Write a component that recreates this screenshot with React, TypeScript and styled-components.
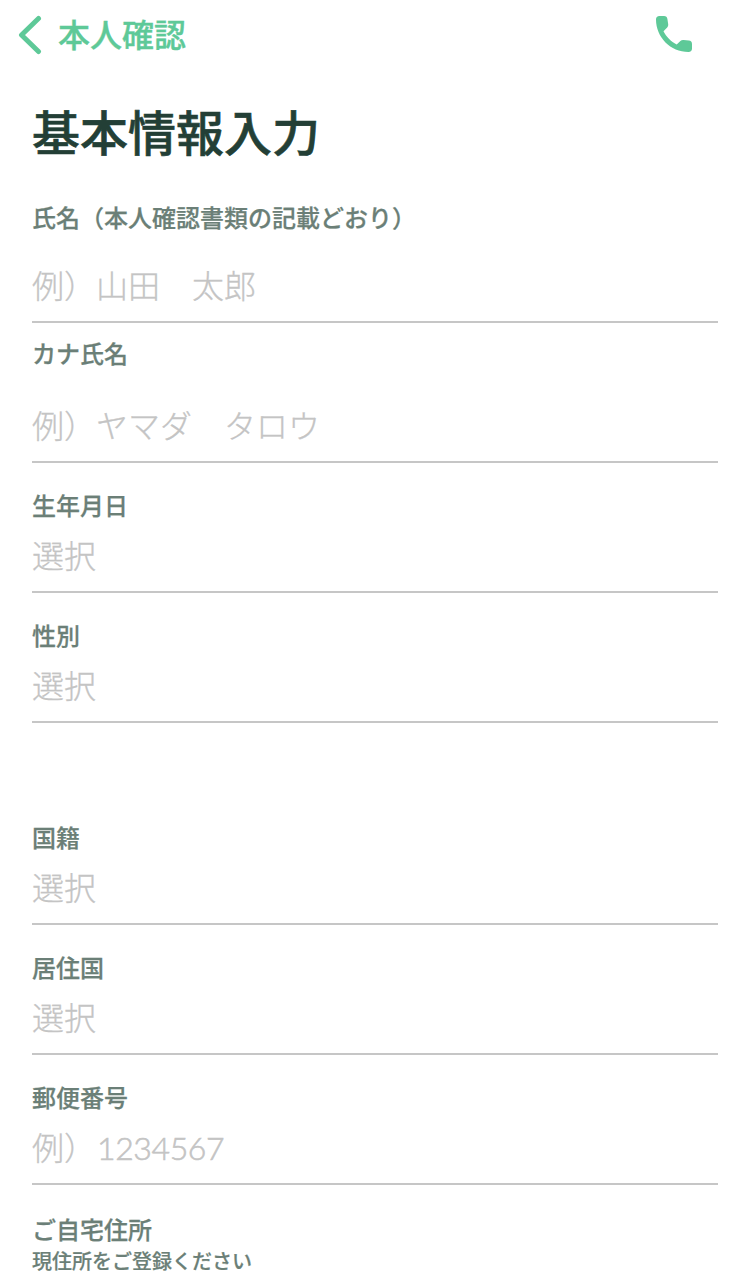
import React from "react";
import styled, { createGlobalStyle } from "styled-components";

const GlobalStyle = createGlobalStyle`
  * { box-sizing: border-box; }
  html, body { margin: 0; padding: 0; background: #ffffff; }
  body {
    font-family: "Noto Sans CJK JP", sans-serif;
    height: 1285px;
    overflow: hidden;
  }
`;

const Screen = styled.div`
  width: 750px;
  height: 1285px;
  overflow: hidden;
  background: #ffffff;
`;

const NavBar = styled.header`
  display: flex;
  align-items: flex-start;
  justify-content: space-between;
  height: 70px;
  padding: 15px 58px 0 18px;
  color: #5ec998;
`;

const BackButton = styled.a`
  display: flex;
  align-items: center;
  gap: 16px;
  height: 40px;
`;

const BackText = styled.span`
  font-size: 32px;
  line-height: 40px;
  padding-bottom: 5px;
  font-weight: 500;
  -webkit-text-stroke: 0.35px currentColor;
`;

const Main = styled.main`
  padding: 0 32px;
`;

const Title = styled.h1`
  margin: 0;
  height: 122px;
  padding-top: 28px;
  font-size: 48px;
  line-height: 64px;
  font-weight: 500;
  color: #233f36;
  -webkit-text-stroke: 0.6px currentColor;
`;

const Field = styled.div<{ $height: number; $top: number; $gap: number }>`
  height: ${(p) => p.$height}px;
  padding-top: ${(p) => p.$top}px;
  display: flex;
  flex-direction: column;
  gap: ${(p) => p.$gap}px;
  border-bottom: 2px solid #c6c6c6;
`;

const Label = styled.div`
  font-size: 24px;
  line-height: 32px;
  font-weight: 500;
  color: #6b7f77;
  -webkit-text-stroke: 0.25px currentColor;
`;

const Value = styled.div`
  font-size: 32px;
  line-height: 44px;
  font-weight: 300;
  color: #c4c4c4;
  white-space: pre;
  -webkit-text-stroke: 0.3px currentColor;
`;

const Digits = styled.span`
  font-family: Lato, sans-serif;
  letter-spacing: -0.4px;
  margin-left: 1px;
  -webkit-text-stroke: 0.6px currentColor;
`;

const Section = styled.section<{ $top?: number }>`
  padding-top: ${(p) => p.$top ?? 0}px;
`;

const Hint = styled.div`
  margin-top: 2px;
  font-size: 20px;
  line-height: 28px;
  font-weight: 500;
  color: #6b7f77;
  -webkit-text-stroke: 0.2px currentColor;
`;

export default function App() {
  return (
    <Screen>
      <GlobalStyle />
      <NavBar>
        <BackButton>
          <svg width="24" height="40" viewBox="0 0 24 40" fill="none">
            <path d="M20.5 3.5L3.5 20L20.5 36.5" stroke="currentColor" strokeWidth="5" strokeLinecap="round" strokeLinejoin="round" />
          </svg>
          <BackText>本人確認</BackText>
        </BackButton>
        <svg width="36" height="37" viewBox="0 -1 36 37">
          <path
            fill="currentColor"
            d="M3.5 0H8C10 0 11.2 1.1 11.4 3L12.2 8.2C12.3 9.6 12 10.6 11.2 11.4L7.5 15.3C10.2 20.8 15 25.6 20.7 28.6L24.4 25C25.2 24.2 26.2 23.9 27.6 24L32.8 24.5C34.9 24.7 36 25.9 36 28V32.5C36 34.8 34.8 36 32.5 36C14.5 36 0 21.3 0 3.5C0 1.2 1.2 0 3.5 0Z"
          />
        </svg>
      </NavBar>
      <Main>
        <Title>基本情報入力</Title>
        <Section>
          <Field $height={131} $top={9} $gap={29}>
            <Label>氏名（本人確認書類の記載どおり）</Label>
            <Value>例）山田　太郎</Value>
          </Field>
          <Field $height={140} $top={14} $gap={33}>
            <Label>カナ氏名</Label>
            <Value>例）ヤマダ　タロウ</Value>
          </Field>
          <Field $height={130} $top={26} $gap={11}>
            <Label>生年月日</Label>
            <Value>選択</Value>
          </Field>
          <Field $height={130} $top={26} $gap={11}>
            <Label>性別</Label>
            <Value>選択</Value>
          </Field>
        </Section>
        <Section $top={72}>
          <Field $height={130} $top={26} $gap={11}>
            <Label>国籍</Label>
            <Value>選択</Value>
          </Field>
          <Field $height={130} $top={26} $gap={11}>
            <Label>居住国</Label>
            <Value>選択</Value>
          </Field>
          <Field $height={130} $top={26} $gap={11}>
            <Label>郵便番号</Label>
            <Value>
              例）<Digits>1234567</Digits>
            </Value>
          </Field>
        </Section>
        <Section $top={28}>
          <Label>ご自宅住所</Label>
          <Hint>現住所をご登録ください</Hint>
        </Section>
      </Main>
    </Screen>
  );
}
